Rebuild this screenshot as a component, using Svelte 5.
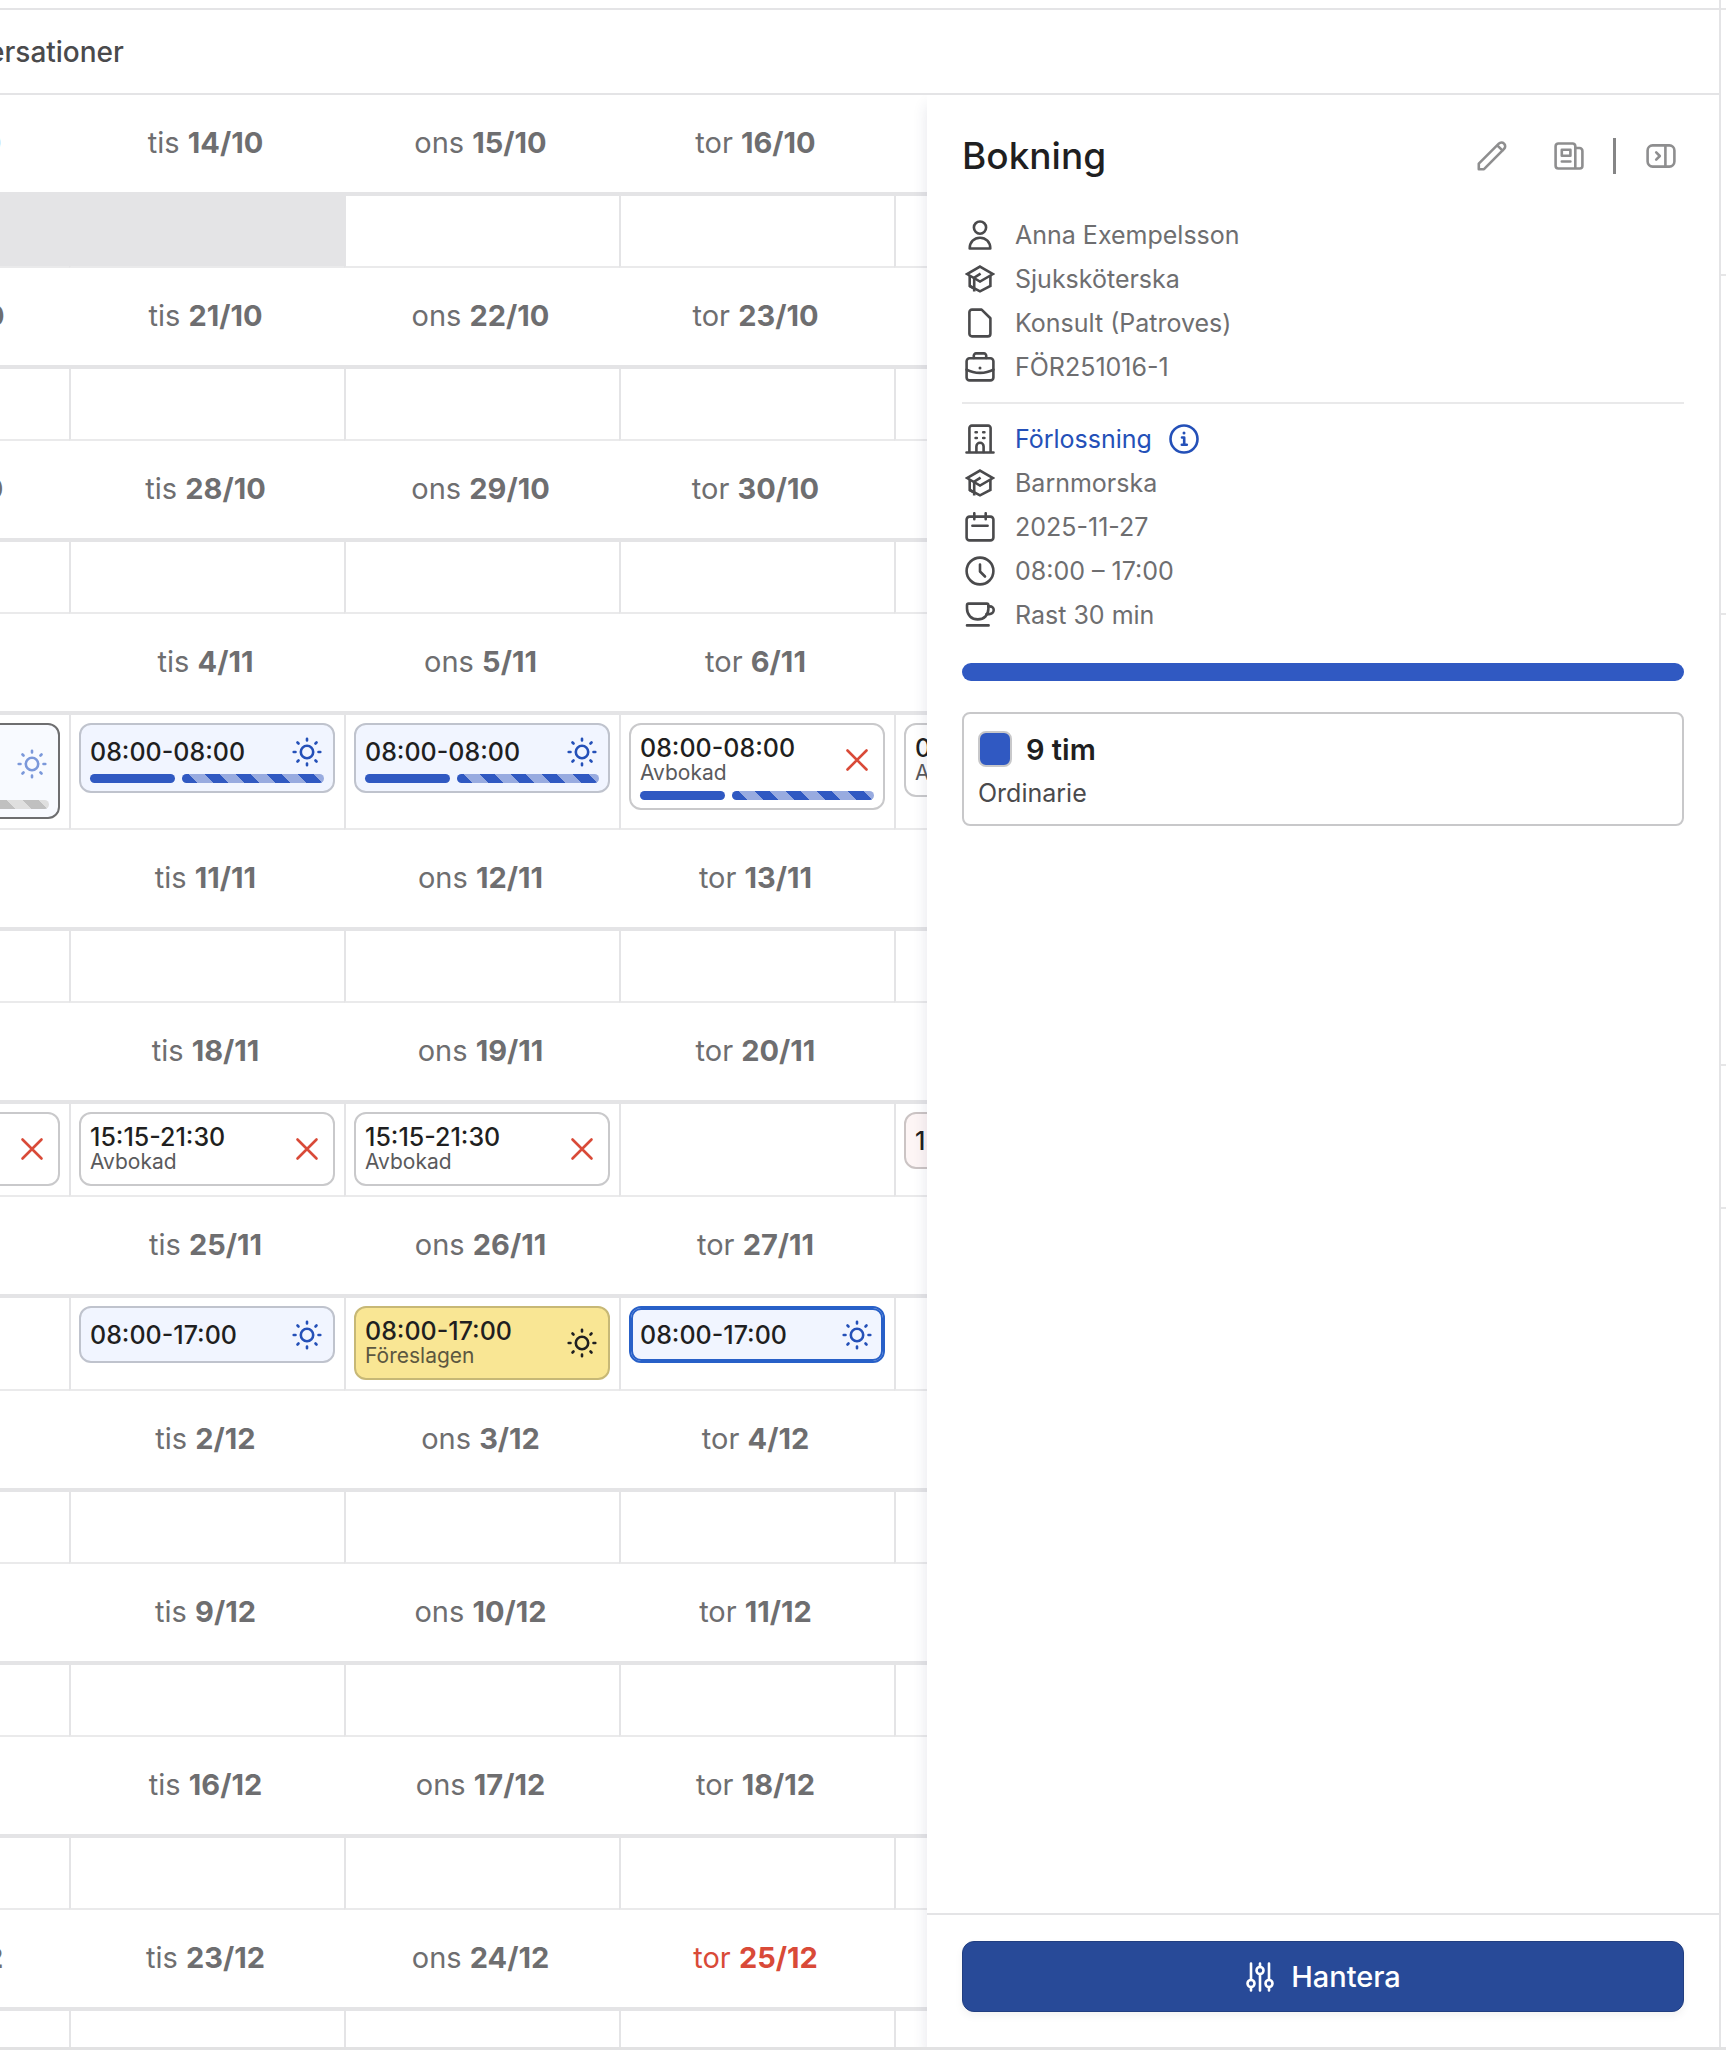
<script>
  const days = ['mån', 'tis', 'ons', 'tor'];

  const cancelled = (time, bars = false) => ({ time, note: 'Avbokad', icon: 'cross', bars });
  const day = (time, extra = {}) => ({ time, icon: 'sun', kind: 'blue', ...extra });

  const weeks = [
    { dates: ['13/10', '14/10', '15/10', '16/10', ''], closed: [0, 1] },
    { dates: ['20/10', '21/10', '22/10', '23/10', ''] },
    { dates: ['27/10', '28/10', '29/10', '30/10', ''] },
    {
      dates: ['3/11', '4/11', '5/11', '6/11', ''],
      shifts: [
        day('08:00', { kind: 'past', bars: true }),
        day('08:00-08:00', { bars: true }),
        day('08:00-08:00', { bars: true }),
        cancelled('08:00-08:00', true),
        cancelled('08:00'),
      ],
    },
    { dates: ['10/11', '11/11', '12/11', '13/11', ''] },
    {
      dates: ['17/11', '18/11', '19/11', '20/11', ''],
      shifts: [
        cancelled('15:15'),
        cancelled('15:15-21:30'),
        cancelled('15:15-21:30'),
        null,
        { time: '15:15', kind: 'pink' },
      ],
    },
    {
      dates: ['24/11', '25/11', '26/11', '27/11', ''],
      shifts: [
        null,
        day('08:00-17:00'),
        day('08:00-17:00', { kind: 'yellow', note: 'Föreslagen' }),
        day('08:00-17:00', { kind: 'selected' }),
        null,
      ],
    },
    { dates: ['1/12', '2/12', '3/12', '4/12', ''] },
    { dates: ['8/12', '9/12', '10/12', '11/12', ''] },
    { dates: ['15/12', '16/12', '17/12', '18/12', ''] },
    { dates: ['22/12', '23/12', '24/12', '25/12', ''], holidays: [3] },
  ];

  const person = [
    ['user', 'Anna Exempelsson'],
    ['cap', 'Sjuksköterska'],
    ['file', 'Konsult (Patroves)'],
    ['case', 'FÖR251016-1'],
  ];
  const booking = [
    ['building', 'Förlossning', true],
    ['cap', 'Barnmorska'],
    ['calendar', '2025-11-27'],
    ['clock', '08:00 – 17:00'],
    ['cup', 'Rast 30 min'],
  ];
</script>

{#snippet icon(name)}
  <svg class="icon {name}" viewBox="0 0 30 30" aria-hidden="true">
    {#if name === 'user'}
      <circle cx="15" cy="7.6" r="6.1" />
      <path d="M4.7 28.5c0-6.4 4.4-10.8 10.3-10.8s10.3 4.4 10.3 10.8z" />
    {:else if name === 'cap'}
      <path d="M15 2.6 28 10 15 17.6 2 10z" />
      <path d="M4.7 12v10L15 27.4 25.4 22V12" />
      <path d="M15.6 9.6 9.2 13.6V27.6M4.7 22l4.5 2.6" />
    {:else if name === 'file'}
      <path d="M7 1.6h9.6l8.8 8.6v15.6a2.6 2.6 0 0 1-2.6 2.6H7a2.6 2.6 0 0 1-2.6-2.6V4.2A2.6 2.6 0 0 1 7 1.6z" />
    {:else if name === 'case'}
      <rect x="1.6" y="6.2" width="26.8" height="22.2" rx="3" />
      <path d="M8.8 6V3.6a2.2 2.2 0 0 1 2.2-2.2h8a2.2 2.2 0 0 1 2.2 2.2V6M1.6 17.6c8 4.4 18.8 4.4 26.8 0" />
      <path d="M15 16v.1" class="dot" />
    {:else if name === 'building'}
      <path d="M4.4 28V4a2.4 2.4 0 0 1 2.4-2.4h16.4A2.4 2.4 0 0 1 25.6 4v24M1.5 28.5h27" />
      <path d="M11.4 28v-5.6a3.6 3.6 0 0 1 7.2 0V28M10.6 8.3h1.2M18.2 8.3h1.2M10.6 14h1.2M18.2 14h1.2" />
    {:else if name === 'calendar'}
      <rect x="1.6" y="4.6" width="26.8" height="23.8" rx="3" />
      <path d="M9.3 1.2v6M20.7 1.2v6M7.4 13.7h15.2" />
    {:else if name === 'clock'}
      <circle cx="15" cy="15" r="13.4" />
      <path d="M15 8.5v7l5 5" />
    {:else if name === 'cup'}
      <path d="M3.6 3.6h18.2a1.6 1.6 0 0 1 1.6 1.6v3.4c0 6.6-4.4 10.8-10.6 10.8S2 15.2 2 8.6V5.2a1.6 1.6 0 0 1 1.6-1.6z" />
      <path d="M23.3 6.4h1.5c2.3 0 3.9 1.6 3.9 3.7 0 2.4-2 4-4.6 4h-2.5M2 25.4h21.6" />
    {:else if name === 'info'}
      <circle cx="15" cy="15" r="13.5" />
      <path d="M13 13.5h2.2v7M12.8 20.7h5" />
      <path d="M15 9v.1" class="dot" />
    {:else if name === 'pencil'}
      <path d="M1.8 28.2v-5.6L21.8 2.7a3.6 3.6 0 0 1 5.3 5.2L7 28.2zM20.3 4.4l5.3 5.2" />
    {:else if name === 'news'}
      <path d="M4.3 2.5h14.4a2.6 2.6 0 0 1 2.6 2.6v22.4H4.3a2.7 2.7 0 0 1-2.7-2.7V5.2a2.7 2.7 0 0 1 2.7-2.7zM21.3 7h4.2a2.9 2.9 0 0 1 2.9 2.9V25a2.6 2.6 0 0 1-2.6 2.5h-4.5" />
      <path d="M7.8 8.8h8.6v6H7.8zM7.8 20.5h8.6" />
    {:else if name === 'collapse'}
      <rect x="1.6" y="4.4" width="26.8" height="21.2" rx="5" />
      <path d="M19.4 4.4v21.2M10.2 11.4l3.6 3.6-3.6 3.6" />
    {:else if name === 'sun'}
      <circle cx="15" cy="15" r="6.2" />
      <path d="M15 1.7v1.8M15 26.5v1.8M1.7 15h1.8M26.5 15h1.8M5.5 5.5l1 1M23.5 23.5l1 1M5.5 24.5l1-1M23.5 6.5l1-1" />
    {:else if name === 'cross'}
      <path d="M5.5 5.5l19 19M24.5 5.5l-19 19" />
    {:else if name === 'sliders'}
      <path d="M6 1.5v16M6 25.5v3M15 1.5v3M15 12.5v16M24 1.5v16M24 25.5v3" />
      <circle cx="6" cy="21.5" r="3.5" /><circle cx="15" cy="8.5" r="3.5" /><circle cx="24" cy="21.5" r="3.5" />
    {/if}
  </svg>
{/snippet}

{#snippet card(s)}
  <button type="button" class="card {s.kind ?? 'plain'}" class:noted={s.note}>
    <span class="row">
      <span class="words">
        <span class="time">{s.time}</span>
        {#if s.note}<span class="note">{s.note}</span>{/if}
      </span>
      {#if s.icon}{@render icon(s.icon)}{/if}
    </span>
    {#if s.bars}
      <span class="bars"><span class="solid"></span><span class="striped"></span></span>
    {/if}
  </button>
{/snippet}

{#snippet facts(list)}
  <ul class="facts">
    {#each list as [name, text, link]}
      <li>
        {@render icon(name)}
        {#if link}
          <a href="#avdelning">{text}</a>
          <button type="button" class="plain-button" aria-label="Information">{@render icon('info')}</button>
        {:else}
          <span>{text}</span>
        {/if}
      </li>
    {/each}
  </ul>
{/snippet}

<div class="page">
  <div class="app">
    <nav class="tabs"><a href="#konversationer">Konversationer</a></nav>
    <div class="body">
      <main class="calendar">
        <table>
          <tbody>
            {#each weeks as week}
              <tr>
                {#each week.dates as date, i}
                  <th scope="col" class:holiday={week.holidays?.includes(i)}>
                    {#if date}{days[i]} <b>{date}</b>{/if}
                  </th>
                {/each}
              </tr>
              <tr>
                {#each week.dates as _, i}
                  <td class:closed={week.closed?.includes(i)}>
                    {#if week.shifts?.[i]}{@render card(week.shifts[i])}{/if}
                  </td>
                {/each}
              </tr>
            {/each}
          </tbody>
        </table>
      </main>

      <aside class="panel">
        <div class="content">
          <header>
            <h1>Bokning</h1>
            <div class="tools">
              <button type="button" class="plain-button" aria-label="Redigera">{@render icon('pencil')}</button>
              <button type="button" class="plain-button" aria-label="Logg">{@render icon('news')}</button>
              <span class="divider"></span>
              <button type="button" class="plain-button" aria-label="Stäng panelen">{@render icon('collapse')}</button>
            </div>
          </header>
          {@render facts(person)}
          <hr />
          {@render facts(booking)}
          <div class="total"></div>
          <section class="hours">
            <div class="amount"><span class="swatch"></span><strong>9 tim</strong></div>
            <div class="type">Ordinarie</div>
          </section>
        </div>
        <footer>
          <button type="button" class="primary">{@render icon('sliders')}Hantera</button>
        </footer>
      </aside>
    </div>
  </div>
  <div class="edge"><span></span><span></span><span></span><span></span><span></span></div>
</div>

<style>
  :global(body) { background: #fff; }
  * { box-sizing: border-box; }
  .page {
    display: flex;
    height: 100vh;
    overflow: hidden;
    border-bottom: 3px solid #e2e2e3;
    font-family: Inter, 'Liberation Sans', sans-serif;
    color: #1f1f21;
  }
  button { font: inherit; color: inherit; cursor: pointer; }
  .app {
    flex: 1;
    min-width: 0;
    display: flex;
    flex-direction: column;
    padding-top: 8px;
  }
  .edge {
    flex: 0 0 7px;
    border-left: 2px solid #e4e4e6;
    display: grid;
    grid-template-rows: 10px 266px 339px 451px 143px;
  }
  .edge span { border-bottom: 2px solid #e6e6e7; }
  .tabs {
    display: flex;
    align-items: center;
    height: 87px;
    border-top: 2px solid #e4e4e6;
    border-bottom: 2px solid #e4e4e6;
  }
  .tabs a {
    margin-left: -79px;
    font-size: 28px;
    line-height: 36px;
    font-weight: 500;
    color: #4a4a4c;
    text-decoration: none;
  }
  .body { flex: 1; min-height: 0; display: flex; }

  .calendar { flex: 1; min-width: 0; overflow: hidden; }
  table {
    width: 1375px;
    margin-left: -206px;
    table-layout: fixed;
    border-collapse: separate;
    border-spacing: 0;
  }
  th {
    height: 101px;
    padding: 0 2px 2px 0;
    border-bottom: 4px solid #e4e4e6;
    font-size: 29px;
    line-height: 36px;
    font-weight: 400;
    color: #6e6e70;
    text-align: center;
    vertical-align: middle;
  }
  th b { font-weight: 700; }
  th.holiday { color: #d94a38; }
  td {
    height: 72px;
    padding: 8px 9px 9px 8px;
    border-left: 2px solid #e4e4e6;
    border-bottom: 2px solid #eaeaeb;
    vertical-align: top;
  }
  td.closed { background: #e4e4e6; background-clip: padding-box; }

  .card {
    display: block;
    width: 100%;
    padding: 0 9px;
    border: 2px solid #c9c9cb;
    border-radius: 12px;
    background: #fff;
    text-align: left;
  }
  .row {
    display: flex;
    align-items: center;
    justify-content: space-between;
    min-height: 53px;
    padding-right: 2px;
  }
  .noted .row { min-height: 70px; }
  .words { display: flex; flex-direction: column; }
  .time { font-size: 25px; line-height: 26px; font-weight: 500; }
  .note { font-size: 21px; line-height: 24px; color: #5a5a5c; }
  .bars { display: flex; gap: 7px; margin-top: -4px; padding-bottom: 8px; }
  .bars span { height: 9px; border-radius: 5px; background-color: #3059c2; }
  .bars .solid { flex: 3; }
  .bars .striped {
    flex: 5;
    background-image: repeating-linear-gradient(45deg, #3059c2 0 11px, #98abe0 11px 22px);
  }
  .card.blue { background: #f1f5ff; border-color: #bfc3cd; }
  .card.selected { background: #f1f5ff; border-color: #2860c8; box-shadow: inset 0 0 0 2px #2860c8; }
  .card.pink { background: #fdf5f5; border-color: #cbc4c4; }
  .card.yellow { background: #f9e694; border-color: #c7b876; }
  .yellow .note { color: #5c5740; }
  .card.past { background: #f8faff; border-color: #6e6e70; }
  .past .row { min-height: 78px; }
  .past .bars { margin-top: -3px; }
  .past .striped { background-color: #c0c0c0; background-image: repeating-linear-gradient(45deg, #c0c0c0 0 11px, #dfdfdf 11px 22px); }

  .icon {
    display: block;
    flex: none;
    width: 30px;
    height: 30px;
    fill: none;
    stroke: currentColor;
    stroke-width: 2.6;
    stroke-linecap: round;
    stroke-linejoin: round;
  }
  .icon .dot { stroke-width: 3; }
  .icon.sun { color: #2450b8; }
  .yellow .icon.sun { color: #1f1f21; }
  .past .icon.sun { color: #7b98da; }
  .icon.cross { color: #d94a38; }
  .icon.cap { stroke-linejoin: miter; stroke-linecap: butt; }

  .panel {
    flex: 0 0 792px;
    display: flex;
    flex-direction: column;
    background: #fff;
    box-shadow: 0 10px 14px rgba(40, 50, 90, 0.12);
    clip-path: inset(0 0 0 -24px);
  }
  .content { flex: 1; padding: 36px 35px 0; }
  header { display: flex; justify-content: space-between; align-items: center; height: 50px; }
  h1 { margin: 0; font-size: 37px; line-height: 48px; font-weight: 500; }
  .tools { display: flex; align-items: center; color: #8e8e8f; padding-right: 8px; }
  .plain-button { display: block; padding: 0; border: 0; background: none; }
  .tools .plain-button + .plain-button { margin-left: 47px; }
  .divider { width: 3px; height: 36px; margin: 0 30px 0 29px; background: #858586; }
  .facts { list-style: none; margin: 0; padding: 0; font-size: 25px; color: #6e6e70; }
  header + .facts { margin-top: 32px; }
  .facts li { display: flex; align-items: center; height: 44px; padding-left: 3px; }
  .facts li > .icon { color: #4a4a4c; margin-right: 20px; }
  .facts a { color: #2450b8; text-decoration: none; }
  .facts .plain-button { color: #2450b8; margin-left: 17px; }
  hr { height: 2px; margin: 13px 0; border: 0; background: #e9e9ea; }
  .total { height: 18px; margin-top: 26px; border-radius: 9px; background: #3059c2; }
  .hours { margin-top: 31px; padding: 15px 14px; border: 2px solid #c8c8ca; border-radius: 8px; }
  .amount { display: flex; align-items: center; gap: 14px; height: 40px; font-size: 29px; }
  .amount strong { font-weight: 600; }
  .swatch { width: 34px; height: 36px; border: 2px solid #c8c8ca; border-radius: 8px; background: #3059c2; }
  .type { height: 40px; font-size: 25px; line-height: 48px; color: #4a4a4c; }
  footer { padding: 26px 35px 35px; border-top: 2px solid #e4e4e6; }
  .primary {
    display: flex;
    align-items: center;
    justify-content: center;
    gap: 16px;
    width: 100%;
    height: 71px;
    border: 1px solid #213e80;
    border-radius: 12px;
    background: #284a98;
    box-shadow: 0 4px 8px rgba(0, 0, 0, 0.05);
    color: #fff;
    font-size: 29px;
    font-weight: 500;
  }
</style>
